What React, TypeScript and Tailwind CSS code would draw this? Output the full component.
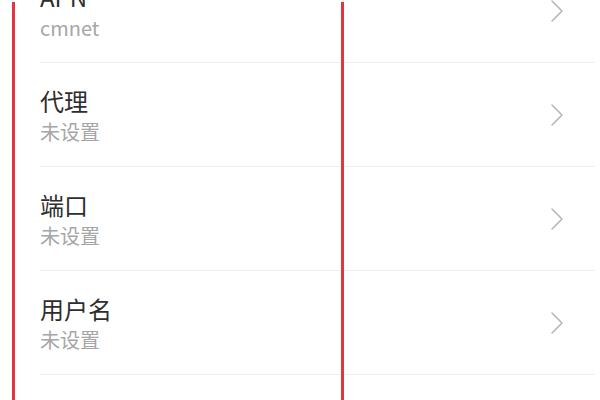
import React from 'react';

const rows = [
  { title: 'APN', value: 'cmnet' },
  { title: '代理', value: '未设置' },
  { title: '端口', value: '未设置' },
  { title: '用户名', value: '未设置' },
];

function Chevron() {
  return (
    <svg width="12" height="22" viewBox="0 0 12 22" fill="none">
      <path d="M1 1 L11 11 L1 21" stroke="#b4b4b4" strokeWidth="1.5" strokeLinecap="round" strokeLinejoin="round" />
    </svg>
  );
}

export default function App() {
  return (
    <div
      className="relative w-[600px] h-[400px] overflow-hidden bg-white"
      style={{ fontFamily: '"Noto Sans CJK SC", "Noto Sans", sans-serif' }}
    >
      <div className="-mt-[41px] pl-10 pr-[5px]">
        {rows.map(row => (
          <div
            key={row.title}
            className="h-[104px] flex items-center border-b border-[#efefef]"
          >
            <div className="flex-1 flex flex-col">
              <span className="text-[24px] leading-[30px] text-[#2e2e2e]">{row.title}</span>
              <span className="mt-[4px] text-[20px] leading-[24px] text-[#a6a6a6]">{row.value}</span>
            </div>
            <div className="mr-[32px] flex items-center">
              <Chevron />
            </div>
          </div>
        ))}
      </div>

      {/* red annotation box */}
      <div className="absolute left-[12px] top-[2px] w-[332px] h-[420px] border-x-[3px] border-[#e4343f] pointer-events-none" />
    </div>
  );
}
